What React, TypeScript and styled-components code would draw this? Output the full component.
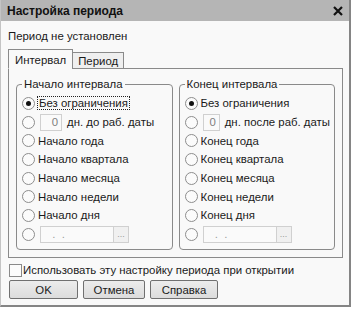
import React from "react";
import styled, { createGlobalStyle } from "styled-components";

const GlobalStyle = createGlobalStyle`
  html, body {
    margin: 0;
    padding: 0;
    background: #ffffff;
  }
  body {
    font-family: "Liberation Sans", Arial, sans-serif;
    font-size: 11.4px;
    color: #1a1a1a;
  }
`;

const startItems = [
  "Начало года",
  "Начало квартала",
  "Начало месяца",
  "Начало недели",
  "Начало дня",
];

const endItems = [
  "Конец года",
  "Конец квартала",
  "Конец месяца",
  "Конец недели",
  "Конец дня",
];

const Group = ({
  title,
  daysText,
  items,
  focused,
}: {
  title: string;
  daysText: string;
  items: string[];
  focused?: boolean;
}) => (
  <GroupBox>
    <Legend>{title}</Legend>
    <RadioRow>
      <Radio $checked />
      <RadioLabel $focused={focused}>Без ограничения</RadioLabel>
    </RadioRow>
    <RadioRow>
      <Radio />
      <NumberBox>0</NumberBox>
      <RadioLabel $indent>{daysText}</RadioLabel>
    </RadioRow>
    {items.map((item) => (
      <RadioRow key={item}>
        <Radio />
        <RadioLabel>{item}</RadioLabel>
      </RadioRow>
    ))}
    <RadioRow>
      <Radio />
      <DateBox>
        <DateText> .  .</DateText>
        <DotsButton>...</DotsButton>
      </DateBox>
    </RadioRow>
  </GroupBox>
);

const App = () => {
  return (
    <>
      <GlobalStyle />
      <Window>
        <TitleBar>
          <Title>Настройка периода</Title>
          <CloseIcon viewBox="0 0 10 10">
            <path d="M1 1 L9 9 M9 1 L1 9" stroke="#111" strokeWidth="2.2" />
          </CloseIcon>
        </TitleBar>
        <Body>
          <Status>Период не установлен</Status>
          <TabStrip>
            <Tab $active>Интервал</Tab>
            <Tab>Период</Tab>
          </TabStrip>
          <TabPanel>
            <Group
              title="Начало интервала"
              daysText="дн. до раб. даты"
              items={startItems}
              focused
            />
            <Group
              title="Конец интервала"
              daysText="дн. после раб. даты"
              items={endItems}
            />
          </TabPanel>
          <CheckRow>
            <CheckBox />
            <span>Использовать эту настройку периода при открытии</span>
          </CheckRow>
          <ButtonRow>
            <Button>OK</Button>
            <Button>Отмена</Button>
            <Button $wide>Справка</Button>
          </ButtonRow>
        </Body>
      </Window>
    </>
  );
};

const Window = styled.div`
  width: 351px;
  height: 307px;
  box-sizing: border-box;
  background: #f9f9f9;
  border-left: 1px solid #c4c4c4;
  border-right: 2px solid #858585;
  border-bottom: 2px solid #858585;
  display: flex;
  flex-direction: column;
`;

const TitleBar = styled.div`
  height: 21px;
  background: #b5b5b5;
  display: flex;
  align-items: center;
  justify-content: space-between;
  padding: 0 6px 0 6px;
`;

const Title = styled.div`
  font-weight: bold;
  font-size: 12px;
  color: #111;
`;

const CloseIcon = styled.svg`
  width: 10px;
  height: 10px;
`;

const Body = styled.div`
  padding: 8px 6px 0 7px;
  display: flex;
  flex-direction: column;
`;

const Status = styled.div`
  height: 14px;
  line-height: 14px;
  margin-bottom: 6px;
`;

const TabStrip = styled.div`
  display: flex;
  align-items: flex-end;
  height: 20px;
  margin-bottom: -1px;
  position: relative;
  z-index: 1;
`;

const Tab = styled.div<{ $active?: boolean }>`
  box-sizing: border-box;
  height: ${(p) => (p.$active ? "20px" : "17px")};
  padding: 0 ${(p) => (p.$active ? "6px" : "5px")};
  display: flex;
  align-items: center;
  border: 1px solid #8a8a8a;
  border-bottom: ${(p) => (p.$active ? "1px solid #f9f9f9" : "1px solid #8a8a8a")};
  background: ${(p) => (p.$active ? "#f9f9f9" : "#efefef")};
  margin-left: ${(p) => (p.$active ? "0" : "-1px")};
  padding-top: ${(p) => (p.$active ? "2px" : "0")};
`;

const TabPanel = styled.div`
  box-sizing: border-box;
  height: 190px;
  border: 1px solid #8a8a8a;
  padding: 8px 7px 7px 7px;
  display: flex;
  gap: 6px;
`;

const GroupBox = styled.fieldset`
  flex: 1;
  margin: 0;
  padding: 3px 4px 0 5px;
  border: 1px solid #8a8a8a;
  border-radius: 4px;
  display: flex;
  flex-direction: column;
  min-width: 0;
`;

const Legend = styled.legend`
  padding: 0 2px;
  margin-left: 0;
  line-height: 14px;
`;

const RadioRow = styled.div`
  height: 18.7px;
  display: flex;
  align-items: center;
  white-space: nowrap;
`;

const Radio = styled.span<{ $checked?: boolean }>`
  width: 11px;
  height: 11px;
  border-radius: 50%;
  border: 1px solid #8d8d8d;
  background: #fbfbfb;
  flex: none;
  margin-right: 3px;
  display: flex;
  align-items: center;
  justify-content: center;
  &::after {
    content: "";
    width: 5px;
    height: 5px;
    border-radius: 50%;
    background: ${(p) => (p.$checked ? "#111" : "transparent")};
  }
`;

const RadioLabel = styled.span<{ $focused?: boolean; $indent?: boolean }>`
  outline: ${(p) => (p.$focused ? "1px dotted #222" : "none")};
  padding: 0 ${(p) => (p.$focused ? "1px" : "0")};
  margin-left: ${(p) => (p.$indent ? "5px" : "0")};
`;

const NumberBox = styled.span`
  box-sizing: border-box;
  width: 22px;
  height: 17px;
  border: 1px solid #d0d0d0;
  background: #fafafa;
  color: #808080;
  text-align: right;
  padding-right: 3px;
  line-height: 15px;
  margin-left: 2px;
`;

const DateBox = styled.span`
  box-sizing: border-box;
  width: 89px;
  height: 17px;
  border: 1px solid #d0d0d0;
  background: #fafafa;
  display: flex;
  margin-left: 2px;
`;

const DateText = styled.span`
  flex: 1;
  color: #9a9a9a;
  padding-left: 8px;
  line-height: 14px;
  white-space: pre;
`;

const DotsButton = styled.span`
  width: 14px;
  border-left: 1px solid #d0d0d0;
  background: #f0f0f0;
  color: #9a9a9a;
  font-size: 9px;
  text-align: center;
  line-height: 15px;
`;

const CheckRow = styled.div`
  display: flex;
  align-items: center;
  height: 14px;
  margin-top: 5px;
`;

const CheckBox = styled.span`
  box-sizing: border-box;
  width: 13px;
  height: 13px;
  border: 1px solid #8a8a8a;
  background: #fcfcfc;
  margin-left: 1px;
  margin-right: 1px;
`;

const ButtonRow = styled.div`
  display: flex;
  gap: 5px;
  margin-top: 3px;
  padding-left: 1px;
`;

const Button = styled.div<{ $wide?: boolean }>`
  box-sizing: border-box;
  width: ${(p) => (p.$wide ? "68px" : "62px")};
  height: 19px;
  border: 1px solid #707070;
  border-radius: 2px;
  background: linear-gradient(#ececec, #dcdcdc);
  display: flex;
  align-items: center;
  justify-content: center;
  &:first-child {
    width: 69px;
  }
`;

export default App;
